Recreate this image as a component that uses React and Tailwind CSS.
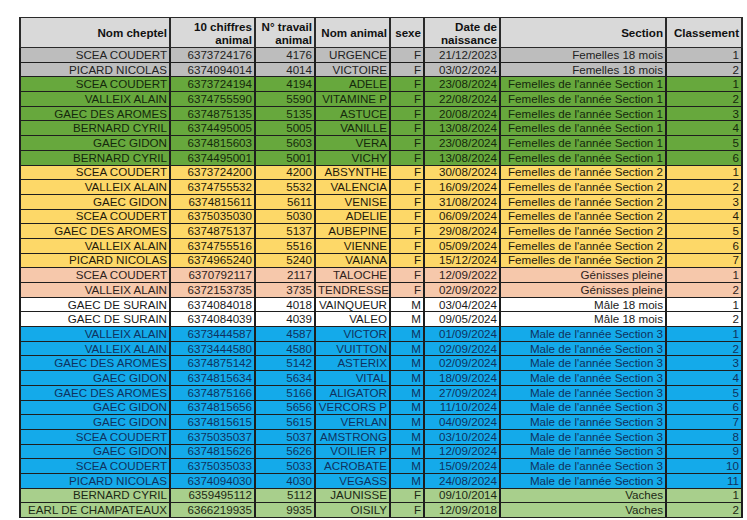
const groups = {
  gray: "bg-[#bdbdbd] text-[#222]",
  green: "bg-[#67a83d] text-[#15290c]",
  yellow: "bg-[#fdd868] text-[#1f1a0a]",
  salmon: "bg-[#f6c8ab] text-[#2e221b]",
  white: "bg-white text-[#1a1a1a]",
  blue: "bg-[#14aaea] text-[#0f3260]",
  lightgreen: "bg-[#a8cf8c] text-[#1c2814]",
};

const rows = [
  ["gray", "SCEA COUDERT", "6373724176", "4176", "URGENCE", "F", "21/12/2023", "Femelles 18 mois", "1"],
  ["gray", "PICARD NICOLAS", "6374094014", "4014", "VICTOIRE", "F", "03/02/2024", "Femelles 18 mois", "2"],
  ["green", "SCEA COUDERT", "6373724194", "4194", "ADELE", "F", "23/08/2024", "Femelles de l'année Section 1", "1"],
  ["green", "VALLEIX ALAIN", "6374755590", "5590", "VITAMINE P", "F", "22/08/2024", "Femelles de l'année Section 1", "2"],
  ["green", "GAEC DES AROMES", "6374875135", "5135", "ASTUCE", "F", "20/08/2024", "Femelles de l'année Section 1", "3"],
  ["green", "BERNARD CYRIL", "6374495005", "5005", "VANILLE", "F", "13/08/2024", "Femelles de l'année Section 1", "4"],
  ["green", "GAEC GIDON", "6374815603", "5603", "VERA", "F", "23/08/2024", "Femelles de l'année Section 1", "5"],
  ["green", "BERNARD CYRIL", "6374495001", "5001", "VICHY", "F", "13/08/2024", "Femelles de l'année Section 1", "6"],
  ["yellow", "SCEA COUDERT", "6373724200", "4200", "ABSYNTHE", "F", "30/08/2024", "Femelles de l'année Section 2", "1"],
  ["yellow", "VALLEIX ALAIN", "6374755532", "5532", "VALENCIA", "F", "16/09/2024", "Femelles de l'année Section 2", "2"],
  ["yellow", "GAEC GIDON", "6374815611", "5611", "VENISE", "F", "31/08/2024", "Femelles de l'année Section 2", "3"],
  ["yellow", "SCEA COUDERT", "6375035030", "5030", "ADELIE", "F", "06/09/2024", "Femelles de l'année Section 2", "4"],
  ["yellow", "GAEC DES AROMES", "6374875137", "5137", "AUBEPINE", "F", "29/08/2024", "Femelles de l'année Section 2", "5"],
  ["yellow", "VALLEIX ALAIN", "6374755516", "5516", "VIENNE", "F", "05/09/2024", "Femelles de l'année Section 2", "6"],
  ["yellow", "PICARD NICOLAS", "6374965240", "5240", "VAIANA", "F", "15/12/2024", "Femelles de l'année Section 2", "7"],
  ["salmon", "SCEA COUDERT", "6370792117", "2117", "TALOCHE", "F", "12/09/2022", "Génisses pleine", "1"],
  ["salmon", "VALLEIX ALAIN", "6372153735", "3735", "TENDRESSE", "F", "02/09/2022", "Génisses pleine", "2"],
  ["white", "GAEC DE SURAIN", "6374084018", "4018", "VAINQUEUR", "M", "03/04/2024", "Mâle 18 mois", "1"],
  ["white", "GAEC DE SURAIN", "6374084039", "4039", "VALEO", "M", "09/05/2024", "Mâle 18 mois", "2"],
  ["blue", "VALLEIX ALAIN", "6373444587", "4587", "VICTOR", "M", "01/09/2024", "Male de l'année Section 3", "1"],
  ["blue", "VALLEIX ALAIN", "6373444580", "4580", "VUITTON", "M", "02/09/2024", "Male de l'année Section 3", "2"],
  ["blue", "GAEC DES AROMES", "6374875142", "5142", "ASTERIX", "M", "02/09/2024", "Male de l'année Section 3", "3"],
  ["blue", "GAEC GIDON", "6374815634", "5634", "VITAL", "M", "18/09/2024", "Male de l'année Section 3", "4"],
  ["blue", "GAEC DES AROMES", "6374875166", "5166", "ALIGATOR", "M", "27/09/2024", "Male de l'année Section 3", "5"],
  ["blue", "GAEC GIDON", "6374815656", "5656", "VERCORS P", "M", "11/10/2024", "Male de l'année Section 3", "6"],
  ["blue", "GAEC GIDON", "6374815615", "5615", "VERLAN", "M", "04/09/2024", "Male de l'année Section 3", "7"],
  ["blue", "SCEA COUDERT", "6375035037", "5037", "AMSTRONG", "M", "03/10/2024", "Male de l'année Section 3", "8"],
  ["blue", "GAEC GIDON", "6374815626", "5626", "VOILIER P", "M", "12/09/2024", "Male de l'année Section 3", "9"],
  ["blue", "SCEA COUDERT", "6375035033", "5033", "ACROBATE", "M", "15/09/2024", "Male de l'année Section 3", "10"],
  ["blue", "PICARD NICOLAS", "6374094030", "4030", "VEGASS", "M", "24/08/2024", "Male de l'année Section 3", "11"],
  ["lightgreen", "BERNARD CYRIL", "6359495112", "5112", "JAUNISSE", "F", "09/10/2014", "Vaches", "1"],
  ["lightgreen", "EARL DE CHAMPATEAUX", "6366219935", "9935", "OISILY", "F", "12/09/2018", "Vaches", "2"],
];

const widths = ["w-[150px]", "w-[85px]", "w-[60px]", "w-[75px]", "w-[34px]", "w-[76px]", "w-[166px]", "w-[76px]"];

function Header() {
  const th = "border-y border-x-2 border-[#2a2a2a] px-[2px] text-right align-middle font-bold leading-[13px] whitespace-nowrap";
  return (
    <tr className="h-[30px] bg-[#d9d9d9] text-[#111]">
      <th className={th}>Nom cheptel</th>
      <th className={th}>10 chiffres<br />animal</th>
      <th className={th}>N° travail<br />animal</th>
      <th className={th}>Nom animal</th>
      <th className={th}>sexe</th>
      <th className={th}>Date de<br />naissance</th>
      <th className={th}>Section</th>
      <th className={th}>Classement</th>
    </tr>
  );
}

export default function App() {
  return (
    <div className="min-h-[520px] w-[747px] bg-white pt-[17px] pl-[19px]" style={{ fontFamily: '"Liberation Sans", Arial, sans-serif' }}>
      <table className="table-fixed border-collapse w-[722px] text-[11.6px]">
        <colgroup>
          {widths.map((w, i) => (
            <col key={i} className={w} />
          ))}
        </colgroup>
        <thead>
          <Header />
        </thead>
        <tbody>
          {rows.map(([g, ...cells], i) => (
            <tr key={i} className={"h-[14.7px] " + groups[g]}>
              {cells.map((c, j) => (
                <td
                  key={j}
                  className="border-y border-x-2 border-[#1e1e1e] px-[2px] py-0 text-right leading-[12px] whitespace-nowrap overflow-hidden"
                >
                  {c}
                </td>
              ))}
            </tr>
          ))}
        </tbody>
      </table>
    </div>
  );
}
